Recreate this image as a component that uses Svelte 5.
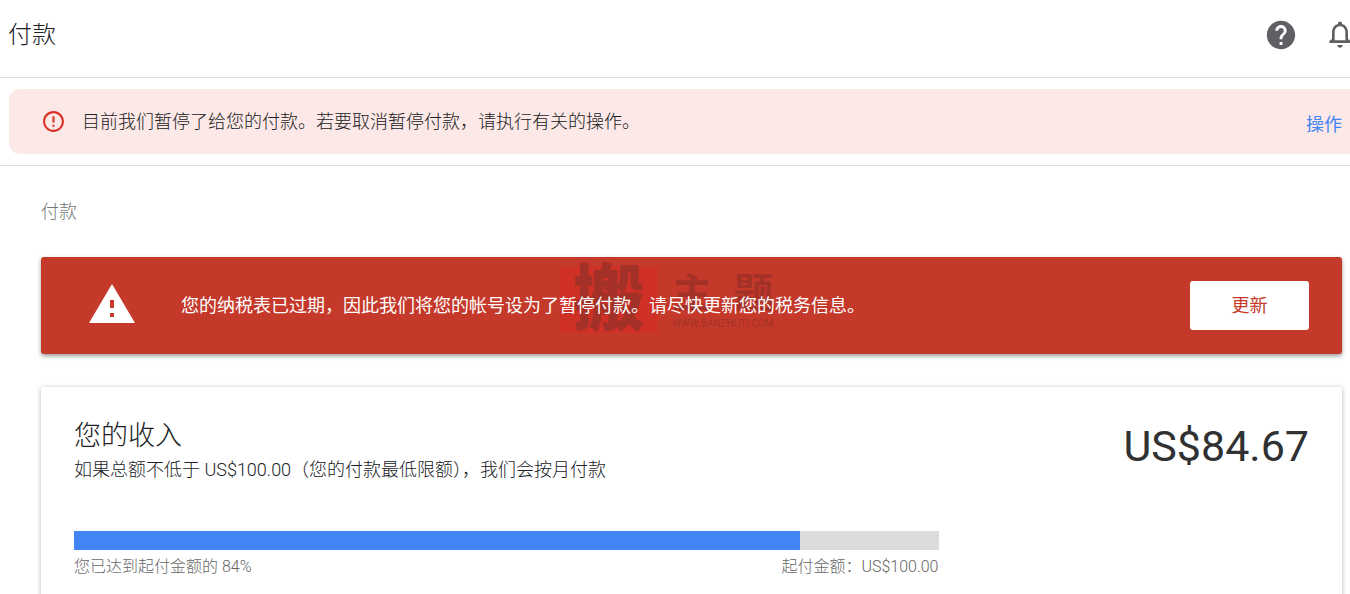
<script lang="ts">
	const earned = 84.67;
	const threshold = 100;

	const money = (value: number) => `US$${value.toFixed(2)}`;
	const percent = Math.floor((earned / threshold) * 100);
</script>

<div class="page">
	<header class="topbar">
		<h1 class="topbar__title">付款</h1>
		<div class="topbar__actions">
			<button class="icon-button" type="button" aria-label="帮助">
				<svg width="34" height="34" viewBox="0 0 24 24" fill="#5f6063" aria-hidden="true">
					<path
						d="M12 2C6.48 2 2 6.48 2 12s4.48 10 10 10 10-4.48 10-10S17.52 2 12 2zm1 17h-2v-2h2v2zm2.07-7.75l-.9.92C13.45 12.9 13 13.5 13 15h-2v-.5c0-1.1.45-2.1 1.17-2.83l1.24-1.26c.37-.36.59-.86.59-1.41 0-1.1-.9-2-2-2s-2 .9-2 2H8c0-2.21 1.79-4 4-4s4 1.79 4 4c0 .88-.36 1.68-.93 2.25z"
					/>
				</svg>
			</button>
			<button class="icon-button" type="button" aria-label="通知">
				<svg width="32" height="32" viewBox="0 0 24 24" fill="#5f6063" aria-hidden="true">
					<path
						d="M12 21.500c1.1 0 2-.9 2-2h-4c0 1.1.9 2 2 2zm6-6.500v-5c0-3.070-1.630-5.640-4.500-6.320V3.300c0-.83-.67-1.500-1.500-1.500s-1.500.67-1.500 1.500v.38C7.640 4.360 6 6.920 6 10v5l-2 1.500V18h16v-1.500L18 15zm-2 1H8v-6c0-2.480 1.510-4.500 4-4.500s4 2.020 4 4.500v6z"
					/>
				</svg>
			</button>
		</div>
	</header>

	<div class="notice-wrap">
		<div class="notice" role="status">
			<svg class="notice__icon" width="25" height="25" viewBox="0 0 24 24" fill="#d93025" aria-hidden="true">
				<path
					d="M11 15h2v2h-2v-2zm0-8h2v6h-2V7zm.99-5C6.470 2 2 6.480 2 12s4.470 10 9.990 10C17.520 22 22 17.520 22 12S17.520 2 11.990 2zM12 20c-4.420 0-8-3.580-8-8s3.580-8 8-8 8 3.580 8 8-3.580 8-8 8z"
				/>
			</svg>
			<p class="notice__text">目前我们暂停了给您的付款。若要取消暂停付款，请执行有关的操作。</p>
			<a class="notice__link" href="#action">操作</a>
		</div>
	</div>

	<main class="content">
		<p class="crumb">付款</p>

		<section class="alert">
			<div class="watermark">
				<span class="watermark__seal">搬</span>
				<span class="watermark__side">
					<span class="watermark__name"><span>主</span><span>题</span></span>
					<span class="watermark__site">WWW.BANZHUTI.COM</span>
				</span>
			</div>
			<svg class="alert__icon" width="46" height="44" viewBox="0 0 46 44" aria-hidden="true">
				<path d="M23 0L46 39H0z" fill="#fff" />
				<path d="M21 16h4v8h-4zM21 29h4v4h-4z" fill="#c5392a" />
			</svg>
			<p class="alert__text">您的纳税表已过期，因此我们将您的帐号设为了暂停付款。请尽快更新您的税务信息。</p>
			<button class="alert__button" type="button">更新</button>
		</section>

		<section class="card">
			<div class="card__head">
				<div>
					<h2 class="card__title">您的收入</h2>
					<p class="card__subtitle">
						如果总额不低于 {money(threshold)}（您的付款最低限额），我们会按月付款
					</p>
				</div>
				<p class="card__amount">{money(earned)}</p>
			</div>
			<div class="progress">
				<div class="progress__track">
					<div class="progress__bar" style={`width: ${percent}%`}></div>
				</div>
				<div class="progress__labels">
					<span>您已达到起付金额的 {percent}%</span>
					<span>起付金额：{money(threshold)}</span>
				</div>
			</div>
		</section>
	</main>
</div>

<style>
	:global(body) {
		overflow: hidden;
		background: #fff;
	}

	.page {
		font-family: Roboto, 'Noto Sans CJK SC', sans-serif;
		font-size: 18px;
		font-weight: 300;
		line-height: 24px;
		color: #202124;
	}

	h1,
	h2,
	p {
		margin: 0;
		font-weight: inherit;
	}

	button {
		font: inherit;
		border: none;
		cursor: pointer;
	}

	.topbar {
		display: flex;
		align-items: center;
		justify-content: space-between;
		padding: 18px 0 25px 8px;
		border-bottom: 1px solid #dadce0;
	}

	.topbar__title {
		font-size: 24px;
		line-height: 34px;
		color: #202124;
	}

	.topbar__actions {
		display: flex;
		align-items: center;
		gap: 26px;
		margin-right: -6px;
	}

	.icon-button {
		display: flex;
		padding: 0;
		background: none;
	}

	.notice-wrap {
		padding: 11px 0 11px 9px;
		border-bottom: 1px solid #dadce0;
	}

	.notice {
		display: flex;
		align-items: center;
		gap: 16px;
		min-height: 65px;
		padding: 0 8px 0 32px;
		border-radius: 11px 0 0 11px;
		background: #fce8e6;
	}

	.notice__text {
		flex: 1;
	}

	.notice__link {
		padding-top: 6px;
		color: #4285f4;
		font-weight: 400;
		text-decoration: none;
	}

	.content {
		padding: 34px 8px 0 41px;
	}

	.crumb {
		color: #757575;
	}

	.alert {
		position: relative;
		display: flex;
		align-items: center;
		margin-top: 33px;
		padding: 24px 33px 24px 48px;
		border-radius: 3px;
		background: #c5392a;
		box-shadow: 0 2px 4px rgba(0, 0, 0, 0.4);
		color: #fff;
	}

	.alert__icon {
		flex: none;
	}

	.alert__text {
		z-index: 1;
		flex: 1;
		margin-left: 46px;
		font-weight: 400;
	}

	.alert__button {
		width: 119px;
		height: 49px;
		border-radius: 3px;
		background: #fff;
		color: #c5392a;
		font-weight: 400;
	}

	.watermark {
		position: absolute;
		top: 10px;
		left: 519px;
		display: flex;
		align-items: center;
		gap: 14px;
		color: #a33128;
		pointer-events: none;
	}

	.watermark__seal {
		width: 98px;
		border-radius: 3px;
		background: #cf3127;
		font-size: 72px;
		font-weight: 900;
		line-height: 66px;
		text-align: center;
	}

	.watermark__side {
		display: flex;
		flex-direction: column;
	}

	.watermark__name {
		display: flex;
		justify-content: space-between;
		font-size: 40px;
		font-weight: 700;
		line-height: 48px;
	}

	.watermark__site {
		font-size: 10px;
		font-weight: 400;
		line-height: 12px;
	}

	.card {
		margin-top: 33px;
		padding: 32px 33px 48px;
		border-radius: 3px;
		background: #fff;
		box-shadow: 0 1px 5px rgba(0, 0, 0, 0.3);
	}

	.card__head {
		display: flex;
		justify-content: space-between;
	}

	.card__title {
		font-size: 27px;
		line-height: 34px;
	}

	.card__subtitle {
		margin-top: 5px;
	}

	.card__amount {
		color: #303133;
		font-size: 43px;
		font-weight: 400;
		line-height: 54px;
	}

	.progress {
		width: 70%;
		max-width: 865px;
		margin-top: 49px;
	}

	.progress__track {
		height: 19px;
		background: #dcdcdd;
	}

	.progress__bar {
		height: 100%;
		background: #4285f4;
	}

	.progress__labels {
		display: flex;
		justify-content: space-between;
		margin-top: 5px;
		font-size: 16px;
		color: #666;
	}
</style>
